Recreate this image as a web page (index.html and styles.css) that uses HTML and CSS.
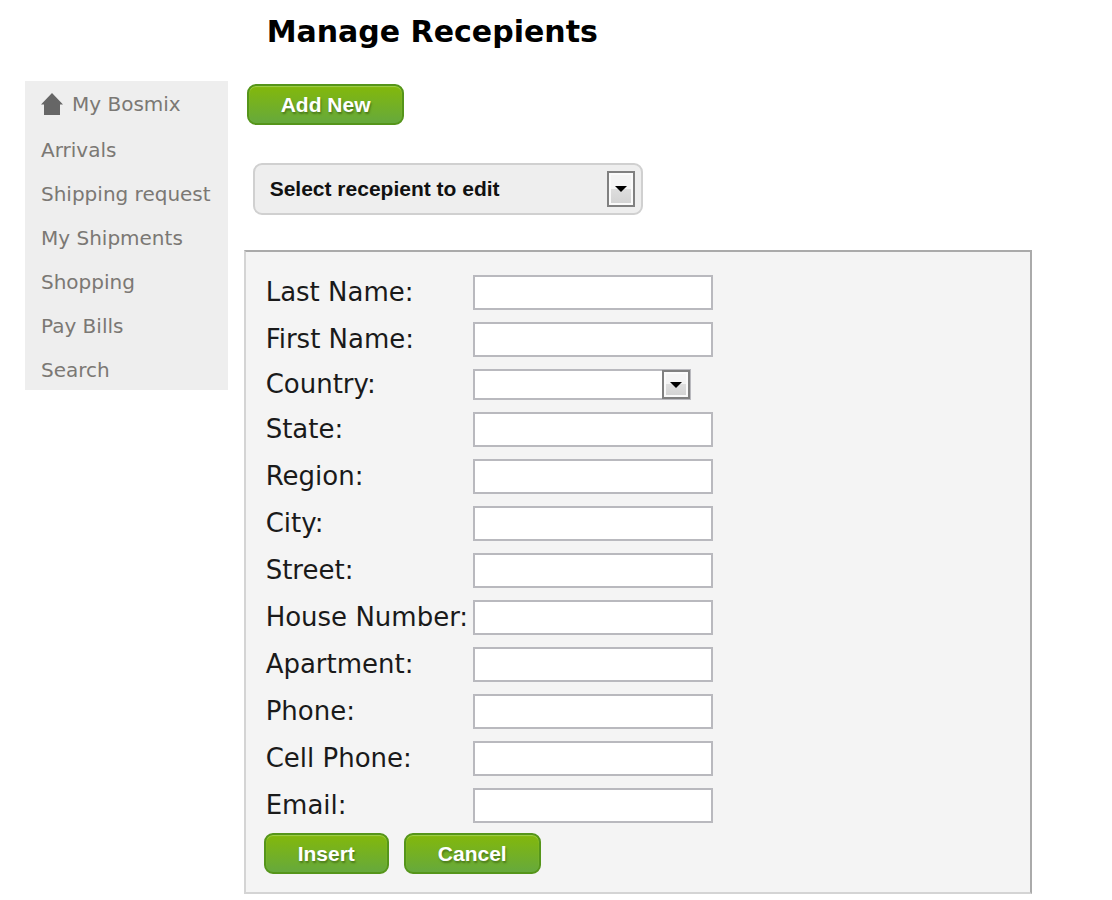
FILE: index.html
```html
<!DOCTYPE html>
<html lang="en">
<head>
<meta charset="utf-8">
<meta name="viewport" content="width=device-width, initial-scale=1">
<title>Manage Recepients</title>
<link rel="stylesheet" href="styles.css">
</head>
<body>
<div class="page">
  <nav class="sidebar" aria-label="Account">
    <a class="sidebar-link sidebar-home" href="#home"><svg class="home-icon" viewBox="0 0 22 22" aria-hidden="true"><path d="M11 0 22 11.500H19V22H3V11.500H0Z"/></svg>My Bosmix</a>
    <a class="sidebar-link" href="#arrivals">Arrivals</a>
    <a class="sidebar-link" href="#shipping">Shipping request</a>
    <a class="sidebar-link" href="#shipments">My Shipments</a>
    <a class="sidebar-link" href="#shopping">Shopping</a>
    <a class="sidebar-link" href="#bills">Pay Bills</a>
    <a class="sidebar-link" href="#search">Search</a>
  </nav>
  <main class="main">
    <h1 class="title">Manage Recepients</h1>
    <button class="btn" type="button">Add New</button>
    <div class="picker">
      <select class="picker-select" aria-label="Recepient">
        <option>Select recepient to edit</option>
      </select>
      <span class="arrow picker-arrow" aria-hidden="true"><svg class="arrow-icon" viewBox="0 0 12 6"><path d="M0 0H12L6 6Z"/></svg></span>
    </div>
    <form class="panel">
      <div class="fields">
        <label class="label" for="last">Last Name:</label><input class="input" id="last" type="text">
        <label class="label" for="first">First Name:</label><input class="input" id="first" type="text">
        <label class="label label-country" for="country">Country:</label>
        <div class="country">
          <select class="country-select" id="country"><option></option></select>
          <span class="arrow" aria-hidden="true"><svg class="arrow-icon" viewBox="0 0 12 6"><path d="M0 0H12L6 6Z"/></svg></span>
        </div>
        <label class="label" for="state">State:</label><input class="input" id="state" type="text">
        <label class="label" for="region">Region:</label><input class="input" id="region" type="text">
        <label class="label" for="city">City:</label><input class="input" id="city" type="text">
        <label class="label" for="street">Street:</label><input class="input" id="street" type="text">
        <label class="label" for="house">House Number:</label><input class="input" id="house" type="text">
        <label class="label" for="apartment">Apartment:</label><input class="input" id="apartment" type="text">
        <label class="label" for="phone">Phone:</label><input class="input" id="phone" type="text">
        <label class="label" for="cell">Cell Phone:</label><input class="input" id="cell" type="text">
        <label class="label" for="email">Email:</label><input class="input" id="email" type="text">
      </div>
      <div class="actions">
        <button class="btn" type="button">Insert</button>
        <button class="btn" type="button">Cancel</button>
      </div>
    </form>
  </main>
</div>
</body>
</html>
```
FILE: styles.css
```css
* {
  box-sizing: border-box;
}

body {
  margin: 0;
  background: #fff;
  color: #1a1a1a;
  font-family: "DejaVu Sans", Verdana, sans-serif;
}

.page {
  display: flex;
  align-items: flex-start;
  gap: 16px;
  padding: 0 80px 7px 25px;
}

.sidebar {
  display: flex;
  flex: none;
  flex-direction: column;
  gap: 20px;
  margin-top: 81px;
  padding: 11px 17px 8px 16px;
  background: #eee;
}

.sidebar-link {
  color: #7b7874;
  font-size: 20px;
  line-height: 24px;
  text-decoration: none;
}

.sidebar-home {
  display: flex;
  align-items: center;
  gap: 9px;
  margin-bottom: 2px;
}

.home-icon {
  width: 22px;
  height: 22px;
  fill: #666;
}

.main {
  flex: 1;
  min-width: 0;
}

.title {
  margin: 12px 0 32px 23px;
  color: #000;
  font-size: 30px;
  line-height: 40px;
}

.btn {
  height: 41px;
  padding: 0 32px;
  border: 2px solid #55951a;
  border-radius: 9px;
  background: linear-gradient(#83b80b, #66a93c);
  box-shadow: inset 0 1px 1px #9fcf4c;
  color: #fff;
  font: bold 21px/24px "Liberation Sans", Arial, sans-serif;
  text-shadow: 1px 2px 2px #4a7a1a;
}

.main > .btn {
  display: block;
  margin-left: 3px;
}

.picker,
.country {
  display: grid;
  align-items: center;
}

.picker {
  width: 390px;
  max-width: 100%;
  margin: 38px 0 35px 9px;
}

.picker-select,
.country-select {
  grid-area: 1 / 1;
  width: 100%;
  appearance: none;
}

.picker-select {
  height: 52px;
  padding: 0 48px 0 15px;
  border: 2px solid #d0d0d0;
  border-radius: 9px;
  background: #eee;
  color: #111;
  font: bold 21px/24px "Liberation Sans", Arial, sans-serif;
}

.arrow {
  display: grid;
  grid-area: 1 / 1;
  justify-self: end;
  place-items: center;
  width: 28px;
  height: 29px;
  margin-right: 1px;
  border: 2px solid #808080;
  background: linear-gradient(#f4f4f4 50%, #dedede 50%, #d2d2d2);
  box-shadow: inset 0 0 0 2px #fafafa;
  pointer-events: none;
}

.picker-arrow {
  height: 36px;
  margin-right: 8px;
}

.arrow-icon {
  width: 12px;
  height: 6px;
  fill: #000;
}

.panel {
  padding: 23px 18px 18px;
  border: 2px solid;
  border-color: #aaa #aaa #d4d4d4 #d4d4d4;
  background: #f4f4f4;
}

.fields {
  display: grid;
  grid-template-columns: 207px 240px;
  row-gap: 12px;
  padding-left: 2px;
}

.label {
  font-size: 26px;
  line-height: 35px;
}

.label-country {
  line-height: 31px;
}

.input {
  width: 100%;
  height: 35px;
  padding: 0 6px;
  border: 2px solid #b9b9be;
  background: #fff;
  font: inherit;
  font-size: 20px;
}

.country {
  width: 218px;
}

.country-select {
  height: 31px;
  padding: 0 32px 0 6px;
  border: 2px solid #b9b9be;
  border-radius: 0;
  background: #fff;
  font: inherit;
  font-size: 20px;
}

.actions {
  display: flex;
  gap: 15px;
  margin-top: 10px;
}
```
